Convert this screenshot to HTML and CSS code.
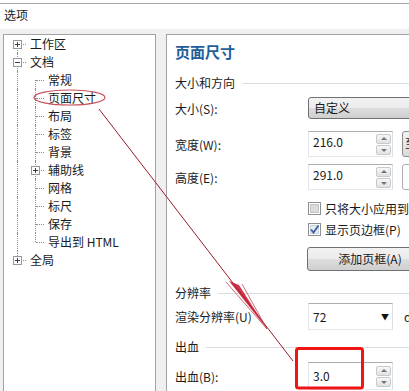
FILE: index.html
```html
<!DOCTYPE html>
<html lang="zh">
<head>
<meta charset="utf-8">
<link rel="stylesheet" href="styles.css">
</head>
<body>
<div class="titlebar">选项</div>
<div class="main">
  <div class="tree">
    <div class="row"><span class="g first h"><span class="box">+</span></span><span class="lbl">工作区</span></div>
    <div class="row"><span class="g mid h"><span class="box minus"></span></span><span class="lbl">文档</span></div>
    <div class="row"><span class="g full"></span><span class="g first h"></span><span class="lbl">常规</span></div>
    <div class="row"><span class="g full"></span><span class="g mid h"></span><span class="lbl">页面尺寸</span></div>
    <div class="row"><span class="g full"></span><span class="g mid h"></span><span class="lbl">布局</span></div>
    <div class="row"><span class="g full"></span><span class="g mid h"></span><span class="lbl">标签</span></div>
    <div class="row"><span class="g full"></span><span class="g mid h"></span><span class="lbl">背景</span></div>
    <div class="row"><span class="g full"></span><span class="g mid h"><span class="box">+</span></span><span class="lbl">辅助线</span></div>
    <div class="row"><span class="g full"></span><span class="g mid h"></span><span class="lbl">网格</span></div>
    <div class="row"><span class="g full"></span><span class="g mid h"></span><span class="lbl">标尺</span></div>
    <div class="row"><span class="g full"></span><span class="g mid h"></span><span class="lbl">保存</span></div>
    <div class="row"><span class="g full"></span><span class="g end h"></span><span class="lbl">导出到 HTML</span></div>
    <div class="row"><span class="g end h"><span class="box">+</span></span><span class="lbl">全局</span></div>
  </div>
  <div class="pane">
    <div class="heading">页面尺寸</div>
    <div class="section s1"><span>大小和方向</span><i></i></div>
    <div class="frow r-size">
      <span class="flabel">大小(S):</span>
      <div class="combo">自定义</div>
    </div>
    <div class="frow r-w">
      <span class="flabel">宽度(W):</span>
      <div class="input"><span class="val">216.0</span><span class="spin"><b class="up"></b><b class="dn"></b></span></div>
      <div class="sidebtn">至</div>
    </div>
    <div class="frow r-h">
      <span class="flabel">高度(E):</span>
      <div class="input"><span class="val">291.0</span><span class="spin"><b class="up"></b><b class="dn"></b></span></div>
      <div class="sidebtn"></div>
    </div>
    <div class="check c1">
      <svg width="13" height="13" viewBox="0 0 13 13"><rect x="0.5" y="0.5" width="12" height="12" fill="#fff" stroke="#8e8f8f"/><rect x="2.5" y="2.5" width="8" height="8" fill="#dcdcdc" stroke="#c4c4c4"/></svg>
      <span>只将大小应用到当前页</span>
    </div>
    <div class="check c2">
      <svg width="13" height="13" viewBox="0 0 13 13"><rect x="0.5" y="0.5" width="12" height="12" fill="#fff" stroke="#8e8f8f"/><rect x="2.5" y="2.5" width="8" height="8" fill="#e6edf5" stroke="#c8d3de"/><path d="M3 6.5 L5.5 9.5 L10.5 2.5" fill="none" stroke="#3a5f9a" stroke-width="1.8"/></svg>
      <span>显示页边框(P)</span>
    </div>
    <div class="btn">添加页框(A)</div>
    <div class="section s2"><span>分辨率</span><i></i></div>
    <div class="frow r-res">
      <span class="flabel">渲染分辨率(U)</span>
      <div class="select"><span class="val">72</span><span class="caret">▼</span></div>
      <span class="unit">dpi</span>
    </div>
    <div class="section s3"><span>出血</span><i></i></div>
    <div class="frow r-bleed">
      <span class="flabel">出血(B):</span>
      <div class="input"><span class="val">3.0</span><span class="spin"><b class="up"></b><b class="dn"></b></span></div>
    </div>
  </div>
</div>
<svg class="annot" width="409" height="391" viewBox="0 0 409 391">
  <ellipse cx="69.5" cy="97.5" rx="35.5" ry="7.5" fill="none" stroke="#c9505a" stroke-width="1.2"/>
  <line x1="99" y1="109" x2="293" y2="361" stroke="#9c1b2b" stroke-width="1"/>
  <polygon points="229,281 239,285 267,329" fill="#c2142c" opacity="0.85"/>
  <line x1="267" y1="329" x2="226" y2="282" stroke="#b0303e" stroke-width="0.7"/>
  <line x1="267" y1="329" x2="242" y2="284" stroke="#b0303e" stroke-width="0.7"/>
  <rect x="296.5" y="348.5" width="66" height="39.5" rx="2" fill="none" stroke="#f01414" stroke-width="3"/>
</svg>
</body>
</html>
```
FILE: styles.css
```css
html, body {
  margin: 0;
  padding: 0;
}
body {
  width: 409px;
  height: 391px;
  overflow: hidden;
  position: relative;
  background: #fff;
  font-family: "Noto Sans CJK SC", "Microsoft YaHei", sans-serif;
  font-size: 12px;
  color: #1a1a1a;
}
.titlebar {
  margin-top: 3px;
  border-top: 1px solid #a9a9a9;
  height: 25px;
  line-height: 22px;
  padding-left: 4px;
  background: #fff;
}
.main {
  display: flex;
  gap: 10px;
  background: #f0f0f0;
  padding: 5px 0 0 3px;
  height: 362px;
}
.tree {
  flex: none;
  width: 147px;
  background: #fff;
  border: 1px solid #a3a3a3;
  border-bottom: none;
  padding-left: 4px;
}
.row {
  display: flex;
  align-items: center;
  height: 18px;
}
.lbl {
  margin-left: 4px;
  white-space: nowrap;
  line-height: 18px;
}
.g {
  position: relative;
  flex: none;
  width: 18px;
  height: 18px;
}
.g::before {
  content: "";
  position: absolute;
  left: 9px;
  border-left: 1px dotted #8c8c8c;
}
.g.full::before, .g.mid::before { top: 0; bottom: 0; }
.g.first::before { top: 9px; bottom: 0; }
.g.end::before { top: 0; height: 9px; }
.g.h::after {
  content: "";
  position: absolute;
  left: 10px;
  right: 0;
  top: 9px;
  border-top: 1px dotted #8c8c8c;
}
.box {
  position: absolute;
  z-index: 1;
  left: 5px;
  top: 5px;
  width: 7px;
  height: 7px;
  border: 1px solid #979797;
  background: #fff;
  font-size: 0;
}
.box::before, .box::after {
  content: "";
  position: absolute;
  background: #404040;
}
.box::before { left: 1px; top: 3px; width: 5px; height: 1px; }
.box::after { left: 3px; top: 1px; width: 1px; height: 5px; }
.box.minus::after { display: none; }

.pane {
  flex: none;
  width: 320px;
  background: #fff;
  border: 1px solid #a3a3a3;
  border-right: none;
  border-bottom: none;
  padding-left: 8px;
}
.heading {
  margin-top: 7px;
  height: 20px;
  line-height: 20px;
  font-size: 15px;
  font-weight: bold;
  color: #1f5e99;
}
.section {
  display: flex;
  align-items: center;
  height: 18px;
  line-height: 18px;
}
.section i {
  flex: 1;
  height: 1px;
  background: #d9dde2;
  margin-left: 7px;
}
.s1 { margin-top: 12px; }
.s2 { margin-top: 13px; }
.s3 { margin-top: 8px; }

.frow {
  display: flex;
  align-items: center;
}
.flabel {
  flex: none;
  width: 133px;
  white-space: nowrap;
}
.r-size { margin-top: 5px; height: 22px; }
.r-w { margin-top: 12px; height: 26px; }
.r-h { margin-top: 7px; height: 26px; }
.r-res { margin-top: 1px; height: 27px; }
.r-bleed { margin-top: 6px; height: 28px; }

.combo {
  box-sizing: border-box;
  width: 160px;
  height: 22px;
  line-height: 20px;
  padding-left: 5px;
  border: 1px solid #707070;
  border-radius: 3px;
  background: linear-gradient(#f2f2f2 0%, #ebebeb 50%, #dddddd 51%, #cfcfcf 100%);
}
.input, .select {
  box-sizing: border-box;
  display: flex;
  align-items: center;
  width: 85px;
  height: 100%;
  border: 1px solid #abadb3;
  border-color: #abadb3 #dbdfe6 #e3e9ef #e2e3ea;
  background: #fff;
  padding-left: 4px;
}
.val {
  flex: 1;
  line-height: 16px;
  margin-top: -4px;
}
.spin {
  display: flex;
  flex-direction: column;
  gap: 1px;
  width: 15px;
  margin-right: 1px;
}
.spin b {
  position: relative;
  box-sizing: border-box;
  height: 10px;
  border: 1px solid #c9c9c9;
  border-radius: 2px;
  background: linear-gradient(#f7f7f7, #e2e2e2);
}
.spin b::after {
  content: "";
  position: absolute;
  left: 4px;
  border-left: 3px solid transparent;
  border-right: 3px solid transparent;
}
.spin b.up::after { top: 2px; border-bottom: 3px solid #6b7683; }
.spin b.dn::after { top: 3px; border-top: 3px solid #6b7683; }
.r-bleed .val { margin-top: 0; }
.sidebtn {
  box-sizing: border-box;
  margin-left: 9px;
  width: 40px;
  height: 26px;
  border: 1px solid #8b8b8b;
  border-radius: 3px;
  background: linear-gradient(#f3f3f3, #dcdcdc);
  padding-left: 2px;
  line-height: 22px;
}
.r-h .sidebtn { background: #fff; border-color: #adadad; }
.caret {
  font-size: 8px;
  color: #111;
  margin-right: 3px;
}
.select .val { margin-top: 0; }
.unit {
  margin-left: 11px;
}
.check {
  display: flex;
  align-items: center;
  gap: 4px;
  height: 16px;
  margin-left: 133px;
  white-space: nowrap;
}
.check svg { flex: none; }
.c1 { margin-top: 10px; }
.c2 { margin-top: 5px; }
.btn {
  box-sizing: border-box;
  margin-top: 10px;
  margin-left: 132px;
  width: 126px;
  height: 24px;
  line-height: 22px;
  text-align: center;
  border: 1px solid #707070;
  border-radius: 3px;
  background: linear-gradient(#f2f2f2 0%, #ebebeb 50%, #dddddd 51%, #cfcfcf 100%);
}
.annot {
  position: absolute;
  left: 0;
  top: 0;
  pointer-events: none;
}
```
